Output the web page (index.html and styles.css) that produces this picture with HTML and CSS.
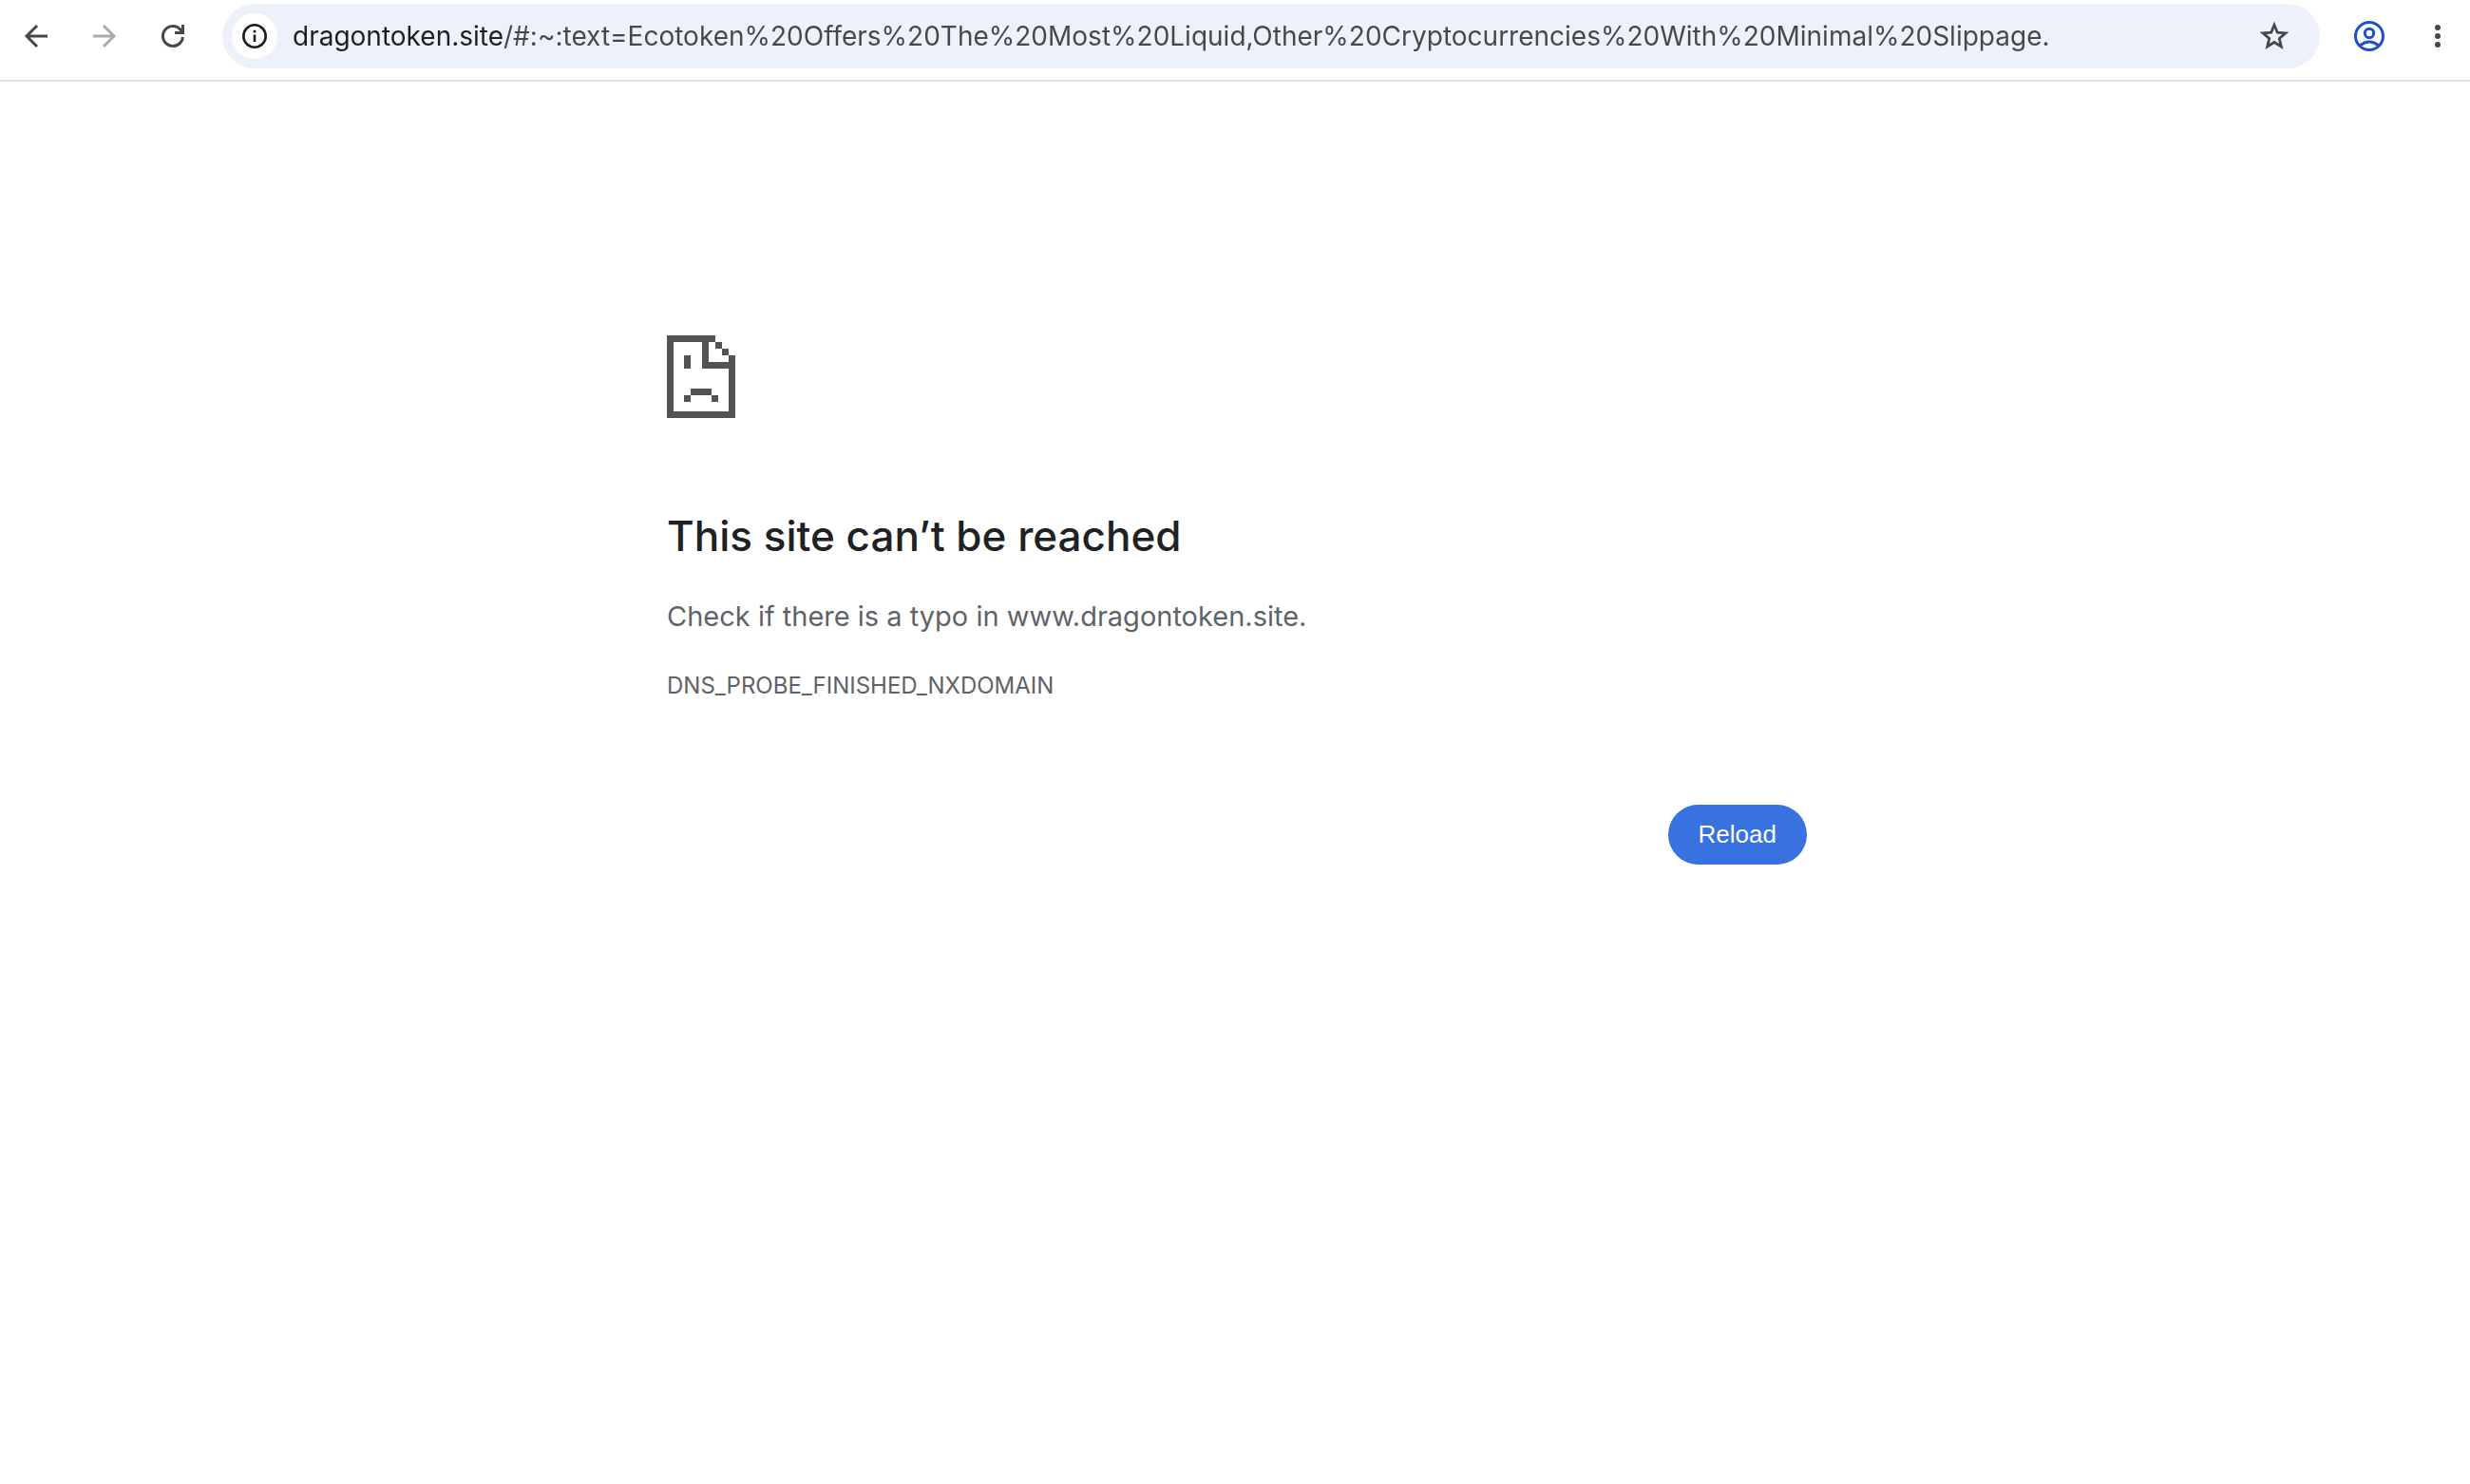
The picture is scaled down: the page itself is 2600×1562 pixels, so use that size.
FILE: index.html
```html
<!DOCTYPE html>
<html lang="en">
<head>
<meta charset="utf-8">
<meta name="viewport" content="width=device-width, initial-scale=1">
<title>dragontoken.site</title>
<link rel="stylesheet" href="styles.css">
</head>
<body>
<header class="toolbar">
  <button class="tool" type="button" aria-label="Back">
    <svg class="icon" viewBox="0 0 32 32" fill="none" stroke="currentColor" stroke-width="3"><path d="M28 16H6M17 5 6 16l11 11"/></svg>
  </button>
  <button class="tool" type="button" aria-label="Forward" disabled>
    <svg class="icon" viewBox="0 0 32 32" fill="none" stroke="currentColor" stroke-width="3"><path d="M4 16h22M15 5l11 11-11 11"/></svg>
  </button>
  <button class="tool" type="button" aria-label="Reload page">
    <svg class="icon" viewBox="0 0 32 32" fill="none" stroke="currentColor" stroke-width="3"><path d="M26.400 17A10.500 10.500 0 1 1 24 9.200L26 12M26.500 4v8.500H18"/></svg>
  </button>
  <form class="address">
    <button class="site-info" type="button" aria-label="View site information">
      <svg class="icon" viewBox="0 0 32 32" fill="none" stroke="currentColor" stroke-width="2.600"><circle cx="16" cy="16" r="11.700"/><path d="M16 14.500V22"/><circle cx="16" cy="11" r="1.600" fill="currentColor" stroke="none"/></svg>
    </button>
    <input class="url" type="text" aria-label="Address" spellcheck="false" value="dragontoken.site/#:~:text=Ecotoken%20Offers%20The%20Most%20Liquid,Other%20Cryptocurrencies%20With%20Minimal%20Slippage.">
    <button class="bookmark" type="button" aria-label="Bookmark this page">
      <svg class="icon" viewBox="0 0 32 32" fill="none" stroke="currentColor" stroke-width="2.800"><path d="M16 4.200l3.300 8 8.600.7-6.600 5.600 2 8.500L16 22.500 8.700 27l2-8.500-6.600-5.600 8.600-.7z"/></svg>
    </button>
  </form>
  <button class="tool profile" type="button" aria-label="Profile">
    <svg class="icon" viewBox="0 0 32 32" fill="none" stroke="currentColor" stroke-width="3"><circle cx="16" cy="16" r="14.500"/><circle cx="16" cy="13" r="4.700"/><path d="M6 26q10-8 20 0"/></svg>
  </button>
  <button class="tool" type="button" aria-label="Menu">
    <svg class="icon" viewBox="0 0 32 32" fill="currentColor"><circle cx="16" cy="7" r="3"/><circle cx="16" cy="16" r="3"/><circle cx="16" cy="25" r="3"/></svg>
  </button>
</header>
<main class="error">
  <svg class="sad-page" viewBox="0 0 72 87" fill="currentColor" shape-rendering="crispEdges" aria-hidden="true">
    <path d="M0 0H51V7H44V28H65V21H72V87H0ZM7 7V80H65V35H37V7Z" fill-rule="evenodd"/>
    <path d="M51 7h7v7h-7zM58 14h7v7h-7zM18 21h7v14h-7zM25 56h22v7H25zM18 63h7v7h-7zM47 63h7v7h-7z"/>
  </svg>
  <h1 class="title">This site can’t be reached</h1>
  <p class="summary">Check if there is a typo in www.dragontoken.site.</p>
  <p class="code">DNS_PROBE_FINISHED_NXDOMAIN</p>
  <div class="actions"><button class="reload" type="button">Reload</button></div>
</main>
</body>
</html>
```
FILE: styles.css
```css
* {
  box-sizing: border-box;
}

body {
  margin: 0;
  background: #fff;
  color: #5f6368;
  font-family: Inter, "Liberation Sans", sans-serif;
}

button {
  margin: 0;
  padding: 0;
  border: 0;
  background: none;
  color: inherit;
  font: inherit;
}

.toolbar {
  display: flex;
  align-items: center;
  gap: 16px;
  padding: 4px 6px 12px 10px;
  border-bottom: 2px solid #e1e1e1;
  color: #474747;
}

.tool {
  display: grid;
  place-items: center;
  flex: none;
  width: 56px;
  height: 56px;
  border-radius: 50%;
}

.tool:disabled {
  color: #ababab;
}

.profile {
  color: #1f50c8;
}

.icon {
  display: block;
  width: 32px;
  height: 32px;
}

.address {
  display: flex;
  align-items: center;
  flex: 1;
  min-width: 0;
  height: 68px;
  margin: 0 8px;
  padding: 0 24px 0 10px;
  border-radius: 34px;
  background: #edf2fa;
}

.site-info,
.bookmark {
  display: grid;
  place-items: center;
  flex: none;
  width: 48px;
  height: 48px;
  border-radius: 50%;
}

.site-info {
  background: #fff;
  color: #1f1f1f;
}

/* The host part of the address is darker than the rest. */
.url {
  flex: 1;
  min-width: 0;
  margin: 0 16px;
  padding: 0;
  border: 0;
  outline: 0;
  background: linear-gradient(to right, #1f1f1f 222px, #474747 222px);
  background-clip: text;
  -webkit-background-clip: text;
  -webkit-text-fill-color: transparent;
  font: 28px/40px Inter, "Liberation Sans", sans-serif;
}

.error {
  max-width: 1204px;
  margin: 0 auto;
  padding: 267px 0 0 4px;
}

.sad-page {
  display: block;
  width: 72px;
  height: 87px;
  color: #535353;
}

.title {
  margin: 94px 0 0;
  color: #202124;
  font-size: 44px;
  font-weight: 500;
  line-height: 60px;
}

.summary {
  margin: 32px 0 0;
  font-size: 29px;
  line-height: 46px;
}

.code {
  margin: 32px 0 0;
  font-size: 24px;
  line-height: 36px;
}

.actions {
  display: flex;
  justify-content: flex-end;
  margin-top: 107px;
}

.reload {
  padding: 0 32px;
  border-radius: 32px;
  background: #3871e0;
  color: #fff;
  font: 26px/63px "Liberation Sans", Arial, sans-serif;
}
```
